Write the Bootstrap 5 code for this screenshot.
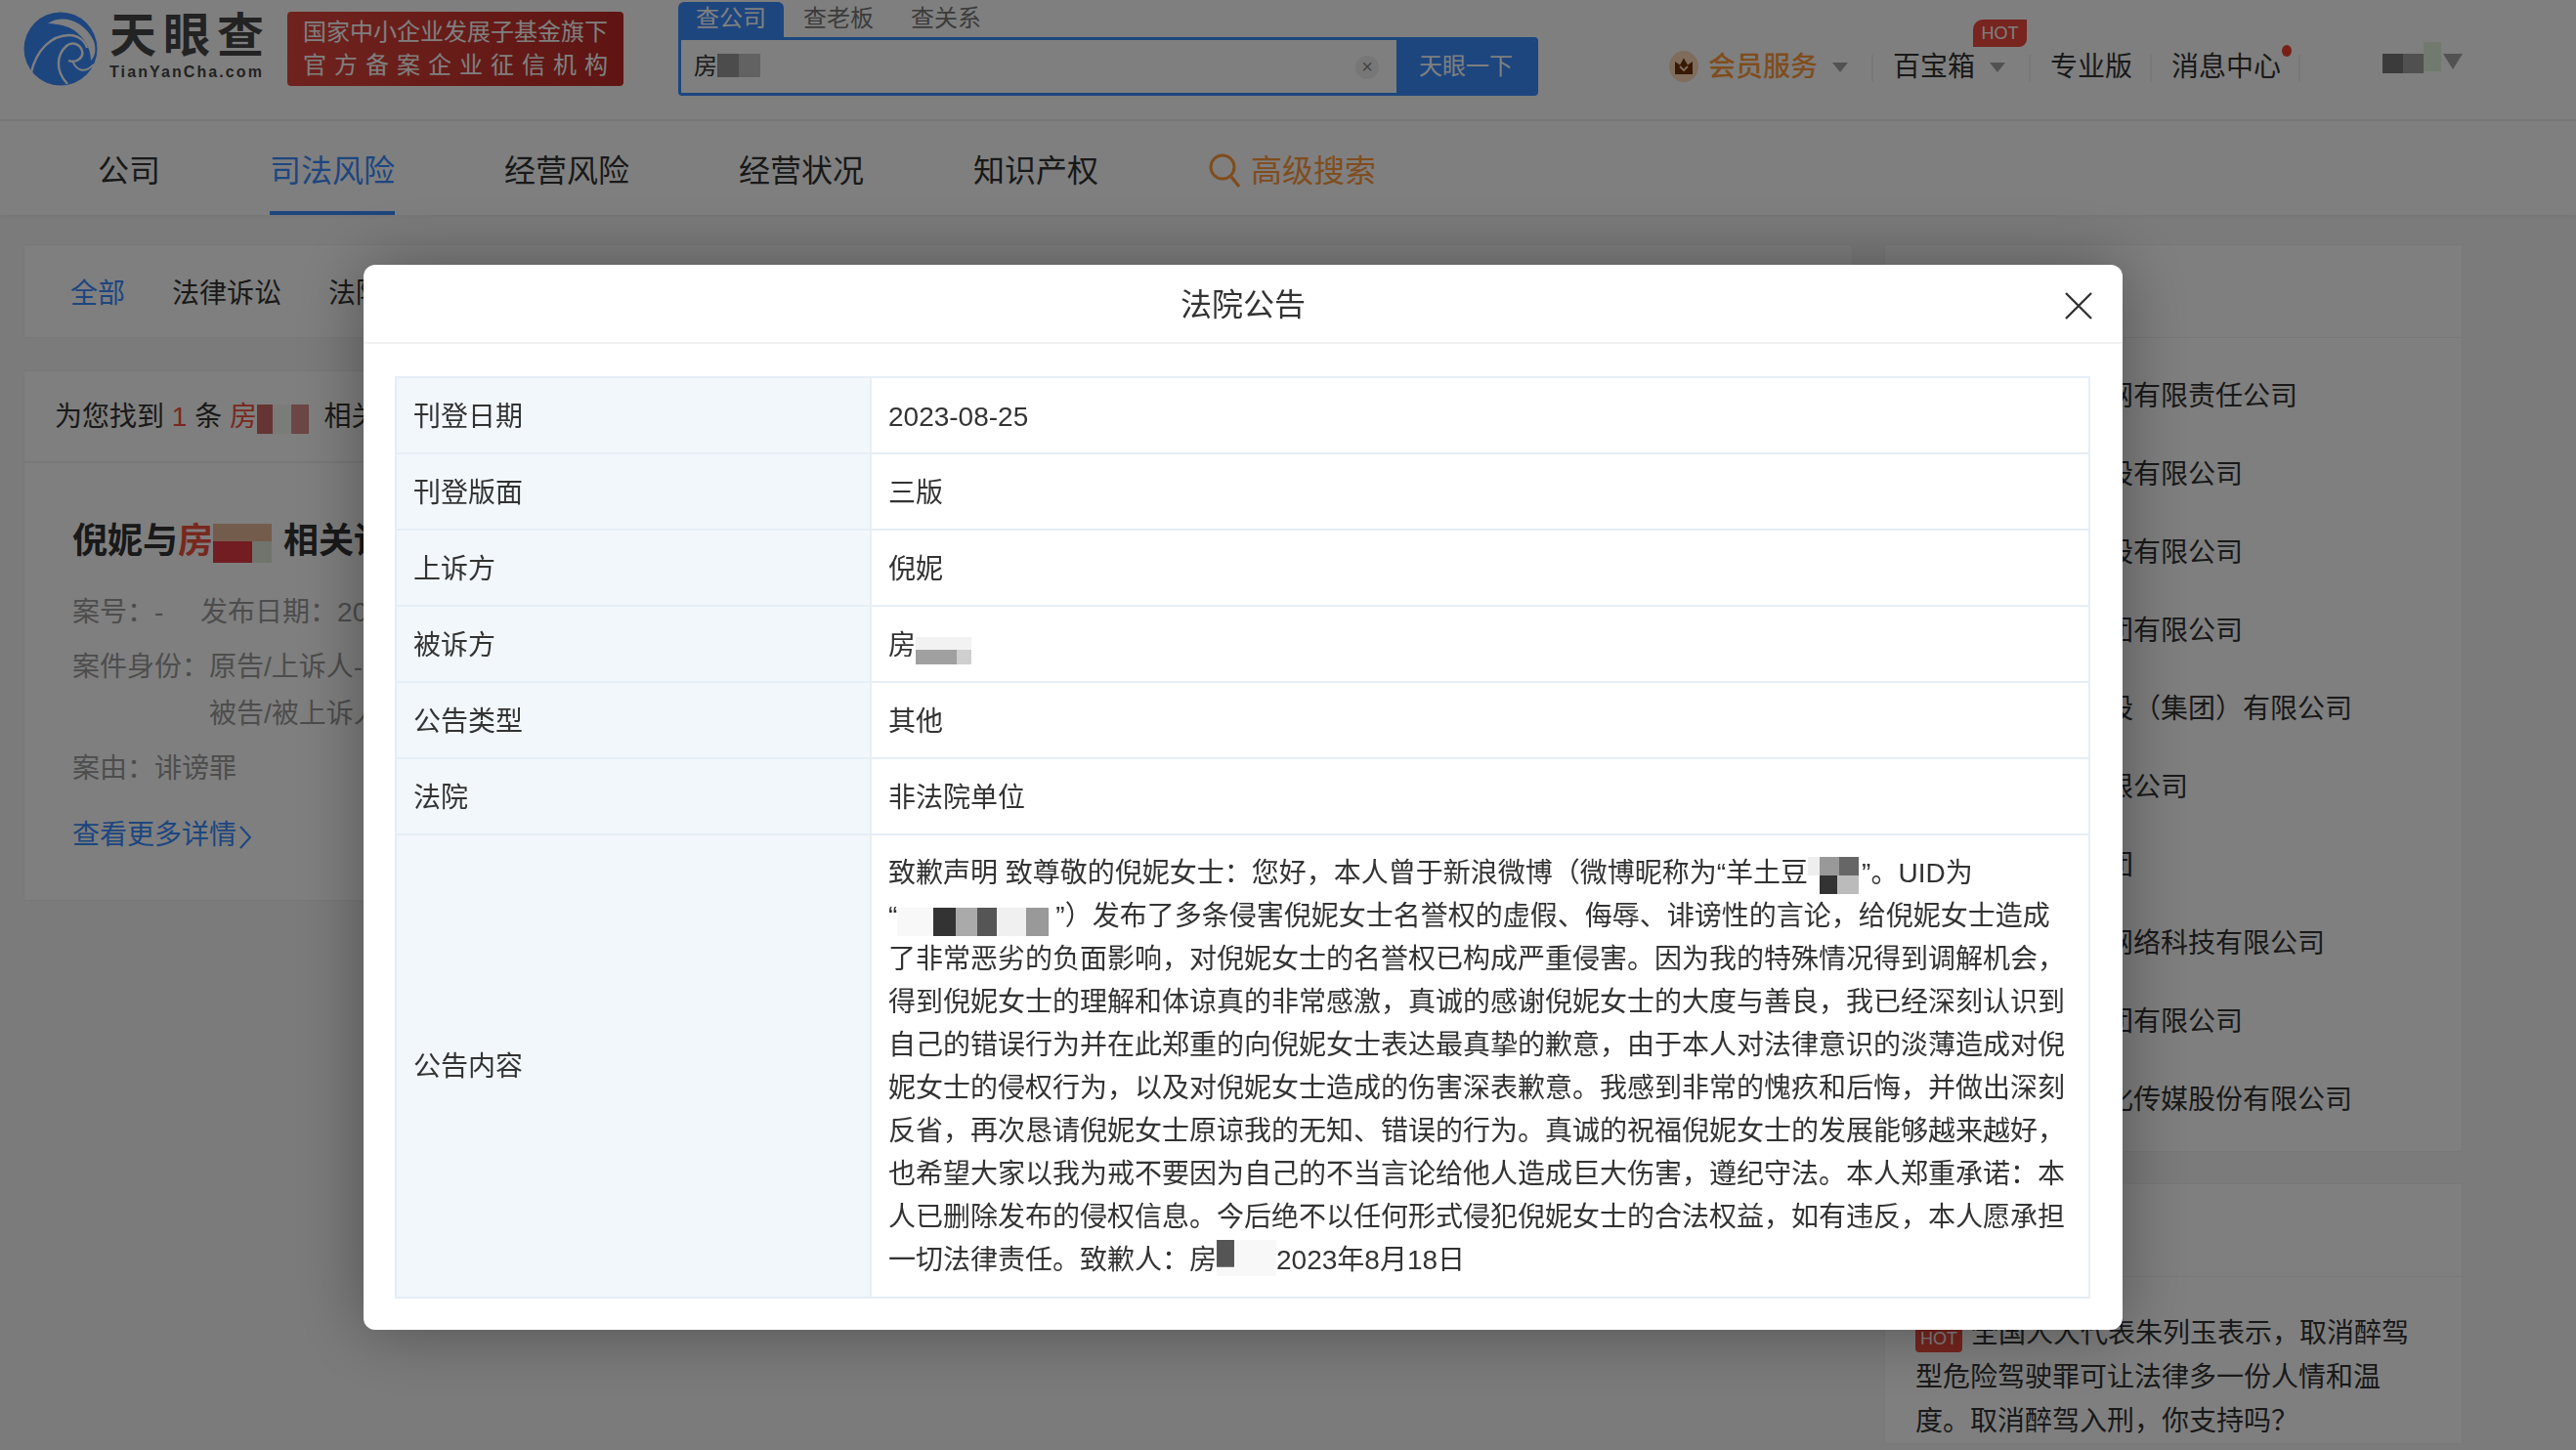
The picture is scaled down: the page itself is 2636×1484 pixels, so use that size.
<!DOCTYPE html>
<html lang="zh-CN">
<head>
<meta charset="utf-8">
<title>法院公告</title>
<link href="https://cdn.jsdelivr.net/npm/bootstrap@5.3.0/dist/css/bootstrap.min.css" rel="stylesheet">
<style>
html,body{height:100%;overflow:hidden}
body{background:#f6f6f6;font-family:"Liberation Sans","Noto Sans CJK SC",sans-serif;font-size:28px;color:#333;line-height:44px}
.site-top{height:124px;background:#fff;border-bottom:2px solid #f0f0f0;padding-left:24px}
.brand-ball{width:76px;height:76px;margin-top:12px;flex:none}
.brand-words{margin-left:12px;margin-top:10px;width:170px;color:#464646}
.brand-cn{font-size:48px;font-weight:700;letter-spacing:7px;line-height:54px;white-space:nowrap}
.brand-en{font-size:16px;font-weight:700;letter-spacing:2.1px;line-height:20px;white-space:nowrap}
.fund-tag{margin-left:12px;margin-top:12px;width:344px;height:76px;border-radius:4px;background:linear-gradient(90deg,#e0463c,#bd2a26);color:#fff;font-size:24px;line-height:34px;padding:4px 16px;white-space:nowrap;flex:none}
.fund-wide{letter-spacing:8px}
.seek{margin-left:56px;margin-top:2px;width:880px;flex:none}
.seek-tabs{height:36px;font-size:24px;line-height:34px;color:#777}
.seek-tab{padding:0 18px;margin-right:2px;border-radius:6px 6px 0 0}
.seek-tab.is-on{background:#3a8cff;color:#fff}
.seek-box{height:60px;border:3px solid #3a8cff;border-radius:0 4px 4px 4px;font-size:24px;background:#fff;overflow:hidden}
.seek-text{padding-left:13px;line-height:52px;color:#333}
.seek-clear{width:24px;height:24px;border-radius:50%;background:#eee;color:#888;font-size:20px;line-height:22px;text-align:center;margin-right:18px;margin-top:2px}
.seek-go{width:142px;background:#3a8cff;color:#fff;font-size:24px;line-height:54px;text-align:center;flex:none}
.top-links{margin-left:134px;margin-top:47px;height:44px;white-space:nowrap;position:relative}
.crown-wrap{width:30px;height:32px;margin-top:5px}
.vip{color:#ff9a3c;margin-left:10px;font-weight:500}
.caret-d{width:0;height:0;border-left:8px solid transparent;border-right:8px solid transparent;border-top:10px solid #a5a5a5;margin-top:17px;margin-left:15px}
.tsep{width:2px;height:28px;background:#f0f0f0;margin-top:9px;margin-left:24px}
.tsep.after-plain{margin-left:18px}
.lk-next{margin-left:20px}
.hot-flag{position:absolute;left:311px;top:-27px;width:55px;height:28px;background:#ee4a3c;border-radius:10px 0 8px 0;color:#fff;font-size:18px;line-height:28px;text-align:center}
.msg-dot{position:absolute;left:627px;top:-1px;width:10px;height:12px;border-radius:50%;background:#f0402f}
.who{position:relative;width:140px;margin-left:26px;height:44px}
.who-a{position:absolute;left:0;top:9px;width:20px;height:33px;background:#fff;opacity:.9}
.who-b{position:absolute;left:58px;top:8px;width:42px;height:20px;background:linear-gradient(90deg,#777 50%,#a0a0a0 50%)}
.who-c{position:absolute;left:100px;top:-4px;width:18px;height:30px;background:#e4f2dc}
.who-d{position:absolute;left:120px;top:8px;width:0;height:0;border-left:10px solid transparent;border-right:10px solid transparent;border-top:16px solid #a5a5a5}
.main-tabs{height:96px;background:#fff;padding-left:100px;gap:112px;font-size:32px;box-shadow:0 2px 4px rgba(0,0,0,.04)}
.main-tab{height:96px;line-height:102px;color:#333;white-space:nowrap}
.main-tab.is-on{color:#3a8cff;border-bottom:4px solid #3a8cff}
.seek-more{color:#ff9a3c;gap:10px}
.seek-more svg{width:34px;height:36px;margin-top:33px}
.page-body{padding:30px 116px 0 24px;gap:32px}
.left-col{width:1872px;flex:none}
.right-col{width:592px;flex:none}
.pane{border:1px solid #f0f0f0;border-radius:2px;background:#fff;--bs-card-bg:#fff}
.filter-pane{height:96px;padding-left:47px;gap:48px;line-height:99px;white-space:nowrap;flex-direction:row;overflow:hidden}
.filter-on{color:#3a8cff}
.result-pane{margin-top:33px;height:543px}
.result-head{height:94px;line-height:94px;padding-left:31px;border-bottom:2px solid #f0f0f0;white-space:nowrap}
.hit{color:#f0503c}
.result-body{padding:53px 0 0 49px;white-space:nowrap;overflow:hidden}
.case-name{font-size:36px;font-weight:700;line-height:54px;margin-bottom:22px}
.case-line{color:#9a9a9a;line-height:48px;margin-bottom:8px}
.case-gap{margin-left:30px}
.case-more{color:#3a8cff;margin-top:20px;line-height:48px}
.case-more svg{width:14px;height:26px;margin-left:2px}
.rail-head{height:95px;border-bottom:1px solid #f0f0f0;line-height:95px;padding-left:31px}
.rail-list{padding:20px 0 0 30px}
.rail-item{height:80px;line-height:80px;white-space:nowrap}
.rail-top{height:929px}
.rail-news{margin-top:32px}
.news-text{padding:35px 30px 0 31px;line-height:45px}
.news-hot{display:inline-block;width:48px;height:28px;background:#ee4a3c;color:#fff;font-size:18px;line-height:28px;text-align:center;border-radius:4px;margin-right:9px;vertical-align:-2px}
.blot{display:inline-block;vertical-align:middle}
.blot-seek{width:44px;height:24px;margin-top:-6px;background:linear-gradient(90deg,#999 0 22px,#c4c4c4 22px)}
.blot-head{width:53px;height:30px;background:linear-gradient(90deg,#cc6a66 0 16px,#f4f8f2 16px 35px,#d88f8c 35px)}
.blot-title{width:60px;height:40px;margin:0 12px 0 0;background:linear-gradient(180deg,#e8b89a 0 45%,transparent 45%),linear-gradient(90deg,#e23a44 0 40px,#e0e8d8 40px)}
.blot-cell{width:57px;height:28px;vertical-align:-10px;background:linear-gradient(180deg,#f2f2f2 0 45%,transparent 45%),linear-gradient(90deg,#a0a0a0 0 42px,#cfcfcf 42px)}
.blot-a{width:55px;height:38px;background:linear-gradient(90deg,#eee 0 12px,#999 12px 32px,#666 32px 52px,#fff 52px) top/100% 50% no-repeat,linear-gradient(90deg,#fff 0 12px,#333 12px 30px,#bbb 30px 52px,#fff 52px) bottom/100% 50% no-repeat}
.blot-b{width:162px;height:29px;margin-top:8px;background:linear-gradient(90deg,#f8f8f8 0 37px,#333 37px 60px,#aaa 60px 82px,#555 82px 102px,#f0f0f0 102px 132px,#999 132px 155px,#fff 155px)}
.blot-c{width:61px;height:37px;margin-top:-8px;background:linear-gradient(90deg,#555 0 18px,#f8f8f8 18px) top/100% 75% no-repeat,#f8f8f8}
.modal-dialog.notice-dialog{max-width:1800px;width:1800px;margin:271px 0 0 372px}
.notice-box{border:0;border-radius:12px;box-shadow:0 0 70px rgba(0,0,0,.35)}
.notice-head{height:81px;border-bottom:2px solid #f2f2f2;position:relative}
.notice-title{font-size:32px;line-height:82px;color:#333}
.notice-close{position:absolute;right:31px;top:18px;width:28px;height:28px;padding:0;border:0;background:none}
.notice-body{padding:33px 33px 32px 32px}
.notice-grid{table-layout:fixed;border-collapse:collapse;margin:0;width:1735px}
.notice-grid>tbody>tr>td{border:2px solid #e6eef6;padding:17px 17px 15px;vertical-align:middle;color:#333;line-height:44px;background:#fff;box-shadow:none}
.notice-grid>tbody>tr.short-row>td{height:78px;padding-top:3px;padding-bottom:0}
.notice-grid>tbody>tr>td.cell-k{background:#f2f7fb}
.col-k{width:486px}
</style>
</head>
<body>
<header class="site-top d-flex">
  <svg class="brand-ball" viewBox="0 0 76 76" aria-hidden="true">
    <circle cx="38" cy="38" r="37.5" fill="#3a8cff"/>
    <path d="M25 12C40 2 62 9 72 30C75 40 73 46 69 50C69 34 58 21 46 16C38 13 31 12 25 12Z" fill="#fff"/>
    <path d="M8 62C13 40 28 24 47 24C56 24 63 30 65 37" fill="none" stroke="#fff" stroke-width="2.4"/>
    <path d="M45 74C32 60 34 44 44 35C50 30 58 33 60 40C62 47 54 53 46 50" fill="none" stroke="#fff" stroke-width="2.4"/>
    <path d="M50 50C54 60 62 64 72 54" fill="none" stroke="#fff" stroke-width="2"/>
  </svg>
  <div class="brand-words">
    <div class="brand-cn">天眼查</div>
    <div class="brand-en">TianYanCha.com</div>
  </div>
  <div class="fund-tag">
    <div>国家中小企业发展子基金旗下</div>
    <div class="fund-wide">官方备案企业征信机构</div>
  </div>
  <div class="seek">
    <div class="seek-tabs d-flex">
      <div class="seek-tab is-on">查公司</div>
      <div class="seek-tab">查老板</div>
      <div class="seek-tab">查关系</div>
    </div>
    <div class="seek-box d-flex align-items-center">
      <div class="seek-text flex-grow-1">房<span class="blot blot-seek"></span></div>
      <div class="seek-clear">×</div>
      <div class="seek-go">天眼一下</div>
    </div>
  </div>
  <div class="top-links d-flex">
    <svg class="crown-wrap" viewBox="0 0 30 32" aria-hidden="true">
      <ellipse cx="15" cy="16" rx="15" ry="16" fill="#ffd9b8"/>
      <path d="M6 11l5 3.5 4-7 4 7 5-3.5v13H6z" fill="#6e3208"/>
      <path d="M11 16l4 4 4-4" fill="none" stroke="#ffd9b8" stroke-width="1.8"/>
    </svg>
    <span class="vip">会员服务</span>
    <span class="caret-d"></span>
    <span class="tsep"></span>
    <span class="lk-next">百宝箱</span>
    <span class="caret-d"></span>
    <span class="tsep"></span>
    <span class="lk-next">专业版</span>
    <span class="tsep after-plain"></span>
    <span class="lk-next">消息中心</span>
    <span class="tsep after-plain"></span>
    <span class="hot-flag">HOT</span>
    <span class="msg-dot"></span>
    <span class="who"><span class="who-a"></span><span class="who-b"></span><span class="who-c"></span><span class="who-d"></span></span>
  </div>
</header>
<nav class="main-tabs d-flex">
  <div class="main-tab">公司</div>
  <div class="main-tab is-on">司法风险</div>
  <div class="main-tab">经营风险</div>
  <div class="main-tab">经营状况</div>
  <div class="main-tab">知识产权</div>
  <div class="main-tab seek-more d-flex">
    <svg viewBox="0 0 34 36" aria-hidden="true"><circle cx="15" cy="14" r="12" fill="none" stroke="#ff9a3c" stroke-width="3"/><path d="M24 24l8 10" stroke="#ff9a3c" stroke-width="3.4"/></svg>
    <span>高级搜索</span>
  </div>
</nav>
<main class="page-body d-flex">
  <div class="left-col">
    <div class="card pane filter-pane d-flex">
      <span class="filter-on">全部</span><span>法律诉讼</span><span>法院公告</span><span>开庭公告</span>
    </div>
    <div class="card pane result-pane">
      <div class="result-head">为您找到 <span class="hit">1</span> 条 <span class="hit">房</span><span class="blot blot-head"></span> &nbsp;相关的法院公告</div>
      <div class="result-body">
        <div class="case-name">倪妮与<span class="hit">房</span><span class="blot blot-title"></span>相关诉讼</div>
        <div class="case-line">案号：- <span class="case-gap">发布日期：2023-08-25</span></div>
        <div class="d-flex case-line"><span>案件身份：</span><span>原告/上诉人-倪妮<br>被告/被上诉人-房某</span></div>
        <div class="case-line">案由：诽谤罪</div>
        <div class="case-more">查看更多详情<svg viewBox="0 0 14 26" aria-hidden="true"><path d="M2 2l10 11L2 24" fill="none" stroke="#3a8cff" stroke-width="2"/></svg></div>
      </div>
    </div>
  </div>
  <aside class="right-col">
    <div class="card pane rail-top">
      <div class="rail-head">相关公司</div>
      <div class="rail-list">
        <div class="rail-item">某某某某某某某网有限责任公司</div>
        <div class="rail-item">某某某某某某某股有限公司</div>
        <div class="rail-item">某某某某某某某股有限公司</div>
        <div class="rail-item">某某某某某某某团有限公司</div>
        <div class="rail-item">某某某某某某某股（集团）有限公司</div>
        <div class="rail-item">某某某某某某有限公司</div>
        <div class="rail-item">某某某某某某某团</div>
        <div class="rail-item">某某某某某某某网络科技有限公司</div>
        <div class="rail-item">某某某某某某某团有限公司</div>
        <div class="rail-item">某某某某某某某化传媒股份有限公司</div>
      </div>
    </div>
    <div class="card pane rail-news">
      <div class="rail-head">热门资讯</div>
      <div class="news-text"><span class="news-hot">HOT</span>全国人大代表朱列玉表示，取消醉驾型危险驾驶罪可让法律多一份人情和温度。取消醉驾入刑，你支持吗？</div>
    </div>
  </aside>
</main>
<div class="modal-backdrop fade show"></div>
<div class="modal d-block" tabindex="-1" role="dialog">
  <div class="modal-dialog notice-dialog">
    <div class="modal-content notice-box">
      <div class="notice-head text-center">
        <div class="notice-title">法院公告</div>
        <button class="notice-close" type="button" aria-label="关闭">
          <svg width="28" height="28" viewBox="0 0 28 28" aria-hidden="true"><path d="M1 1l26 26M27 1L1 27" stroke="#333" stroke-width="2.4" fill="none"/></svg>
        </button>
      </div>
      <div class="notice-body">
        <table class="table notice-grid">
          <colgroup><col class="col-k"><col></colgroup>
          <tbody>
            <tr class="short-row"><td class="cell-k">刊登日期</td><td>2023-08-25</td></tr>
            <tr class="short-row"><td class="cell-k">刊登版面</td><td>三版</td></tr>
            <tr class="short-row"><td class="cell-k">上诉方</td><td>倪妮</td></tr>
            <tr class="short-row"><td class="cell-k">被诉方</td><td>房<span class="blot blot-cell"></span></td></tr>
            <tr class="short-row"><td class="cell-k">公告类型</td><td>其他</td></tr>
            <tr class="short-row"><td class="cell-k">法院</td><td>非法院单位</td></tr>
            <tr>
              <td class="cell-k">公告内容</td>
              <td class="text-nowrap">致歉声明 致尊敬的倪妮女士：您好，本人曾于新浪微博（微博昵称为“羊土豆<span class="blot blot-a"></span>”。UID为<br>“<span class="blot blot-b"></span>”）发布了多条侵害倪妮女士名誉权的虚假、侮辱、诽谤性的言论，给倪妮女士造成<br>了非常恶劣的负面影响，对倪妮女士的名誉权已构成严重侵害。因为我的特殊情况得到调解机会，<br>得到倪妮女士的理解和体谅真的非常感激，真诚的感谢倪妮女士的大度与善良，我已经深刻认识到<br>自己的错误行为并在此郑重的向倪妮女士表达最真挚的歉意，由于本人对法律意识的淡薄造成对倪<br>妮女士的侵权行为，以及对倪妮女士造成的伤害深表歉意。我感到非常的愧疚和后悔，并做出深刻<br>反省，再次恳请倪妮女士原谅我的无知、错误的行为。真诚的祝福倪妮女士的发展能够越来越好，<br>也希望大家以我为戒不要因为自己的不当言论给他人造成巨大伤害，遵纪守法。本人郑重承诺：本<br>人已删除发布的侵权信息。今后绝不以任何形式侵犯倪妮女士的合法权益，如有违反，本人愿承担<br>一切法律责任。致歉人：房<span class="blot blot-c"></span>2023年8月18日</td>
            </tr>
          </tbody>
        </table>
      </div>
    </div>
  </div>
</div>
<script src="https://cdn.jsdelivr.net/npm/bootstrap@5.3.0/dist/js/bootstrap.bundle.min.js"></script>
</body>
</html>
